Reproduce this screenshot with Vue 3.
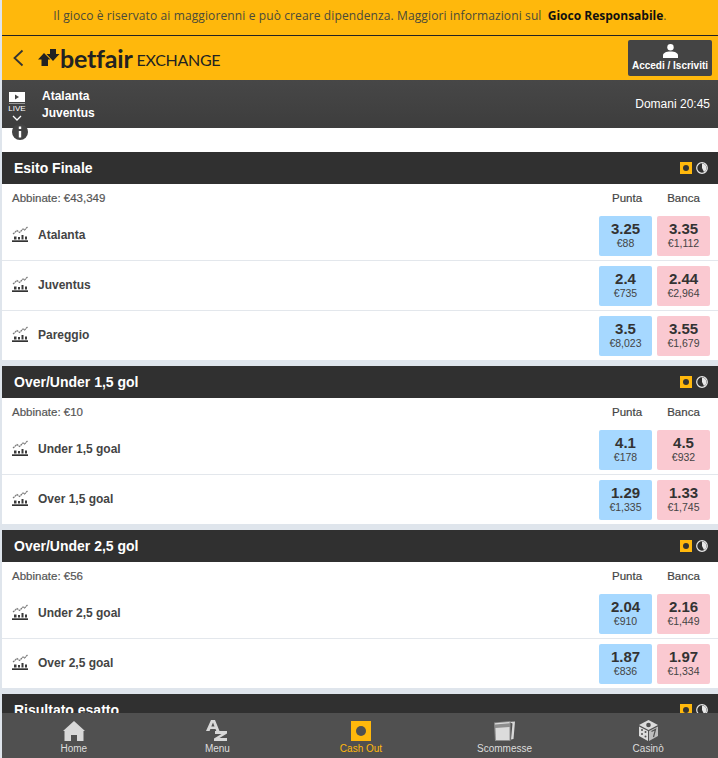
<template>
  <div class="page">
    <div class="notice">
      Il gioco è riservato ai maggiorenni e può creare dipendenza. Maggiori informazioni sul
      <b>Gioco Responsabile</b>.
    </div>

    <header class="topbar">
      <svg class="back" width="14" height="18" viewBox="0 0 14 18">
        <path d="M11.5 1.5 3.5 9l8 7.5" fill="none" stroke="#333" stroke-width="1.8" />
      </svg>
      <div class="logo">
        <svg class="logo-mark" width="22" height="17" viewBox="0 0 22 17">
          <path d="M12 0h6v5h3.500L15 12 8.500 5H12z" fill="#222" />
          <path d="M6 4 12.500 10.500H10V17H3.500V10.500H0z" fill="#222" />
        </svg>
        <span class="logo-name">betfair</span>
        <span class="logo-sub">EXCHANGE</span>
      </div>
      <button class="login">
        <svg width="15" height="14" viewBox="0 0 15 14">
          <circle cx="7.500" cy="3.200" r="3.200" fill="#fff" />
          <path d="M0 14v-2.500c0-2.500 3-4 7.500-4s7.500 1.500 7.500 4V14z" fill="#fff" />
        </svg>
        <span>Accedi / Iscriviti</span>
      </button>
    </header>

    <div class="event">
      <div class="live">
        <svg width="16" height="12" viewBox="0 0 16 12">
          <path d="M0 0h16v10H0z" fill="#fff" />
          <path d="M6 2.500 10 5 6 7.500z" fill="#444" />
          <path d="M0 11h16v1H0z" fill="#999" />
        </svg>
        <span class="live-label">LIVE</span>
        <svg width="10" height="6" viewBox="0 0 10 6">
          <path d="M1 1l4 4 4-4" fill="none" stroke="#fff" stroke-width="1.300" />
        </svg>
      </div>
      <div class="teams">
        <div>Atalanta</div>
        <div>Juventus</div>
      </div>
      <div class="when">Domani 20:45</div>
    </div>

    <div class="info-row">
      <svg class="info" width="16" height="16" viewBox="0 0 16 16">
        <circle cx="8" cy="8" r="8" fill="#444" />
        <path d="M6.800 7h2.400v6.500H6.800zM6.800 2.500h2.400V5H6.800z" fill="#fff" />
      </svg>
    </div>

    <section v-for="m in markets" :key="m.title" class="market">
      <div class="market-head">
        <h2>{{ m.title }}</h2>
        <span class="cash"><i></i></span>
        <svg class="clock" width="12" height="12" viewBox="0 0 12 12">
          <circle cx="6" cy="6" r="5.300" fill="none" stroke="#e8e8e8" stroke-width="1.200" />
          <path d="M6 6V1.500a4.500 4.500 0 0 1 2 8.500z" fill="#e8e8e8" />
        </svg>
      </div>
      <div v-if="m.rows.length" class="sub">
        <span class="matched">Abbinate: {{ m.matched }}</span>
        <span class="col punta">Punta</span>
        <span class="col">Banca</span>
      </div>
      <div v-for="r in m.rows" :key="r.name" class="row">
        <svg class="chart" width="16" height="16" viewBox="0 0 16 16">
          <path d="M1 8 5 4.500 7.500 6.500 11 3l1.500 1L15.500 1" fill="none" stroke="#777" stroke-width="1.200" stroke-dasharray="2 .5" />
          <path d="M2 10.500h2.500v3H2zM6 11h2v2.500H6zM9.500 9h2v4.500h-2zM13 10.500h2v3h-2z" fill="#3a3a3a" />
          <path d="M0 14.300h16V16H0z" fill="#333" />
        </svg>
        <span class="runner">{{ r.name }}</span>
        <button class="odd back-odd">
          <b>{{ r.back[0] }}</b>
          <small>{{ r.back[1] }}</small>
        </button>
        <button class="odd lay-odd">
          <b>{{ r.lay[0] }}</b>
          <small>{{ r.lay[1] }}</small>
        </button>
      </div>
    </section>

    <nav class="tabs">
      <a class="tab">
        <svg width="22" height="20" viewBox="0 0 22 20">
          <path d="M11 0 22 10h-1.500v10H14v-6H8v6H1.500V10H0z" fill="#d8d8d8" />
        </svg>
        <span>Home</span>
      </a>
      <a class="tab">
        <svg width="22" height="21" viewBox="0 0 22 21">
          <path d="M5 0h4l4.500 11H10.300l-.8-2H4.400l-.8 2H0zM5.300 6.500h3.200L7 2.500z" fill="#d8d8d8" />
          <path d="M9 11h12v2.500L13.500 18H21v3H8v-2.500L15.500 14H9z" fill="#d8d8d8" />
        </svg>
        <span>Menu</span>
      </a>
      <a class="tab active">
        <span class="cash-big"><i></i></span>
        <span>Cash Out</span>
      </a>
      <a class="tab">
        <svg width="21" height="20" viewBox="0 0 21 20">
          <path d="M15 1 21 .5 19.500 18l-2.500.5L18.500 2.500z" fill="#d8d8d8" />
          <path d="M0 1.500 16.500 0v20H1z" fill="#8e8e8e" />
          <path d="M1.500 7 15.500 6v13H2z" fill="#dcdcdc" />
          <path d="M1 2.300 15.500 1v1.300L1 3.500z" fill="#dcdcdc" />
        </svg>
        <span>Scommesse</span>
      </a>
      <a class="tab">
        <svg width="19" height="21" viewBox="0 0 19 21">
          <path d="M9.500 0 19 5 9.500 10 0 5z" fill="#dcdcdc" />
          <path d="M0 6.500 9 11v10L0 16z" fill="#dcdcdc" />
          <path d="M19 6.500 10 11v10l9-5z" fill="#bdbdbd" />
          <circle cx="9.500" cy="5" r="2.300" fill="#505050" />
          <circle cx="3" cy="10" r="1" fill="#505050" />
          <circle cx="6.500" cy="12" r="1" fill="#505050" />
          <circle cx="3" cy="14" r="1" fill="#505050" />
          <circle cx="6.500" cy="16.500" r="1" fill="#505050" />
          <path d="M12.500 11.500 16.500 9.500 14.500 17" fill="none" stroke="#505050" stroke-width="1.200" />
        </svg>
        <span>Casinò</span>
      </a>
    </nav>
  </div>
</template>

<script setup>
const markets = [
  {
    title: 'Esito Finale',
    matched: '€43,349',
    rows: [
      { name: 'Atalanta', back: ['3.25', '€88'], lay: ['3.35', '€1,112'] },
      { name: 'Juventus', back: ['2.4', '€735'], lay: ['2.44', '€2,964'] },
      { name: 'Pareggio', back: ['3.5', '€8,023'], lay: ['3.55', '€1,679'] }
    ]
  },
  {
    title: 'Over/Under 1,5 gol',
    matched: '€10',
    rows: [
      { name: 'Under 1,5 goal', back: ['4.1', '€178'], lay: ['4.5', '€932'] },
      { name: 'Over 1,5 goal', back: ['1.29', '€1,335'], lay: ['1.33', '€1,745'] }
    ]
  },
  {
    title: 'Over/Under 2,5 gol',
    matched: '€56',
    rows: [
      { name: 'Under 2,5 goal', back: ['2.04', '€910'], lay: ['2.16', '€1,449'] },
      { name: 'Over 2,5 goal', back: ['1.87', '€836'], lay: ['1.97', '€1,334'] }
    ]
  },
  { title: 'Risultato esatto', matched: '', rows: [] }
]
</script>

<style>
html, body {
  overflow: hidden;
  background: #dfe5ec;
}
</style>

<style scoped>
.page {
  margin-left: 2px;
  height: 758px;
  overflow: hidden;
  font-family: "Liberation Sans", Arial, sans-serif;
  color: #333;
}

.notice {
  height: 35px;
  line-height: 32px;
  background: #ffb80c;
  border-bottom: 1px solid #222;
  text-align: center;
  font-family: "Open Sans", sans-serif;
  font-size: 12px;
  letter-spacing: .115px;
  color: #4a4a3a;
}

.notice b {
  margin-left: 3px;
  letter-spacing: 0;
  color: #111;
}

.topbar {
  height: 44px;
  background: #ffb80c;
  display: flex;
  align-items: center;
  padding: 0 6px 0 9px;
}

.logo {
  display: flex;
  align-items: center;
  margin-left: 13px;
  flex: 1;
}

.logo-mark {
  margin-top: -1px;
}

.logo-name {
  font-family: "Lato", sans-serif;
  font-weight: 700;
  font-size: 25px;
  letter-spacing: -.2px;
  line-height: 26px;
  color: #222;
}

.logo-sub {
  font-family: "Lato", sans-serif;
  font-weight: 400;
  font-size: 16px;
  letter-spacing: -.3px;
  color: #222;
  margin: 3px 0 0 4px;
}

.login {
  width: 84px;
  height: 36px;
  border: 0;
  border-radius: 2px;
  background: #444;
  color: #fff;
  font-family: inherit;
  font-weight: 700;
  font-size: 10px;
  padding: 4px 0 0;
  display: flex;
  flex-direction: column;
  align-items: center;
  gap: 2px;
}

.event {
  height: 48px;
  background: linear-gradient(#474747, #3d3d3d);
  display: flex;
  align-items: center;
  color: #fff;
  font-size: 12px;
  padding-right: 8px;
}

.live {
  width: 30px;
  display: flex;
  flex-direction: column;
  align-items: center;
  padding: 4px 0 0;
  box-sizing: border-box;
}

.live-label {
  font-size: 8px;
  line-height: 8px;
  margin-top: 1px;
  margin-bottom: 2px;
}

.teams {
  flex: 1;
  margin-left: 10px;
  padding-top: 2px;
  font-weight: 700;
  line-height: 17px;
}

.when {
  font-size: 12px;
}

.info-row {
  height: 24px;
  background: #fff;
  position: relative;
}

.info {
  position: absolute;
  left: 10px;
  top: -4px;
}

.market {
  margin-bottom: 6px;
  background: #fff;
}

.market-head {
  height: 32px;
  background: #303030;
  display: flex;
  align-items: center;
  padding: 0 10px 0 12px;
}

.market-head h2 {
  flex: 1;
  margin: 0;
  font-size: 14px;
  font-weight: 700;
  color: #fff;
}

.cash {
  width: 12px;
  height: 12px;
  background: #ffb80c;
  display: flex;
  align-items: center;
  justify-content: center;
  margin-right: 4px;
}

.cash i {
  width: 6px;
  height: 6px;
  border-radius: 50%;
  background: #333;
}

.sub {
  height: 26px;
  display: flex;
  align-items: center;
  font-size: 11px;
  padding: 2px 8px 0 10px;
  box-sizing: border-box;
}

.matched {
  flex: 1;
  color: #555;
  font-size: 11.500px;
  -webkit-text-stroke: .2px #555;
}

.col {
  width: 53px;
  margin-left: 5px;
  text-align: center;
  font-size: 11.500px;
  color: #444;
  -webkit-text-stroke: .2px #444;
}

.punta {
  padding-left: 3px;
  box-sizing: border-box;
}

.row {
  height: 50px;
  display: flex;
  align-items: center;
  padding: 0 8px 0 10px;
  box-shadow: 0 1px 0 #e3e7ec;
}

.row:last-child {
  box-shadow: none;
}

.runner {
  flex: 1;
  margin-left: 10px;
  font-size: 12px;
  font-weight: 700;
  color: #444;
}

.chart {
  margin-bottom: 2px;
}

.odd {
  width: 53px;
  height: 40px;
  margin: 1px 0 0 5px;
  border: 0;
  border-radius: 2px;
  padding: 3px 0 0;
  font-family: inherit;
  color: #333;
  display: flex;
  flex-direction: column;
  align-items: center;
}

.back-odd {
  background: #a6d8ff;
}

.lay-odd {
  background: #fac9d1;
}

.odd b {
  font-size: 15px;
  line-height: 19px;
}

.odd small {
  font-size: 10.500px;
  line-height: 11px;
  color: #444;
}

.tabs {
  position: fixed;
  left: 2px;
  right: -2px;
  bottom: 0;
  height: 45px;
  background: #505050;
  display: flex;
  color: #ddd;
}

.tab {
  flex: 1;
  display: flex;
  flex-direction: column;
  align-items: center;
  justify-content: flex-end;
  gap: 2px;
  font-size: 10px;
  line-height: 12px;
  padding-bottom: 3px;
}

.tab.active {
  color: #ffb80c;
}

.cash-big {
  width: 20px;
  height: 20px;
  background: #ffb80c;
  display: flex;
  align-items: center;
  justify-content: center;
}

.cash-big i {
  width: 10px;
  height: 10px;
  border-radius: 50%;
  background: #505050;
}
</style>
